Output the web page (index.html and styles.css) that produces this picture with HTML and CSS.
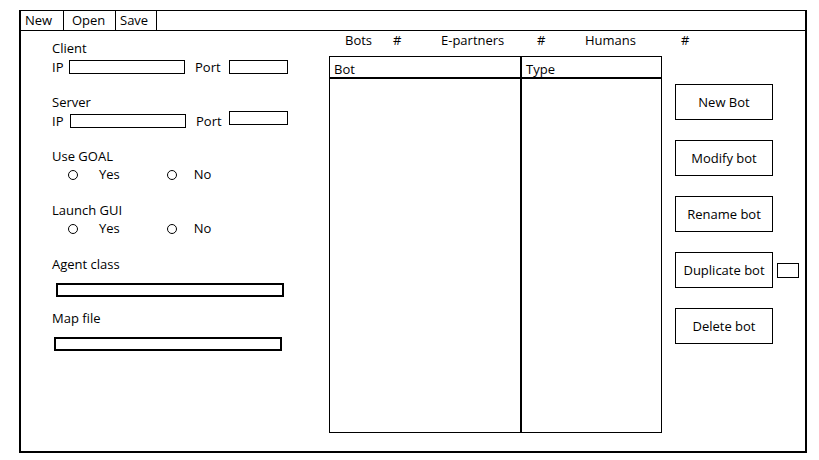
FILE: index.html
```html
<!DOCTYPE html>
<html>
<head>
<meta charset="utf-8">
<link rel="stylesheet" href="styles.css">
</head>
<body>
<div class="frame">
  <div class="menubar">
    <div class="menu-item m-new">New</div>
    <div class="menu-item m-open">Open</div>
    <div class="menu-item m-save">Save</div>
  </div>
  <div class="content">
    <div class="left">
      <div class="group">
        <div class="label">Client</div>
        <div class="row">
          <span class="ip-label">IP</span>
          <span class="field ip-field"></span>
          <span class="port-label">Port</span>
          <span class="field port-field"></span>
        </div>
      </div>
      <div class="group">
        <div class="label">Server</div>
        <div class="row row-server">
          <span class="ip-label ip-label-s">IP</span>
          <span class="field ip-field"></span>
          <span class="port-label port-label-s">Port</span>
          <span class="field port-field raised"></span>
        </div>
      </div>
      <div class="group">
        <div class="label">Use GOAL</div>
        <div class="row radio-row">
          <span class="radio r1"></span><span class="opt-yes">Yes</span>
          <span class="radio r2"></span><span class="opt-no">No</span>
        </div>
      </div>
      <div class="group">
        <div class="label">Launch GUI</div>
        <div class="row radio-row">
          <span class="radio r1"></span><span class="opt-yes">Yes</span>
          <span class="radio r2"></span><span class="opt-no">No</span>
        </div>
      </div>
      <div class="group">
        <div class="label">Agent class</div>
        <div class="wide-field agent-field"></div>
      </div>
      <div class="group">
        <div class="label">Map file</div>
        <div class="wide-field map-field"></div>
      </div>
    </div>
    <div class="center">
      <div class="counts">
        <span>Bots</span><span>#</span><span>E-partners</span><span>#</span><span>Humans</span><span>#</span>
      </div>
      <div class="bot-table">
        <div class="th th-bot">Bot</div>
        <div class="th th-type">Type</div>
        <div class="td td-bot"></div>
        <div class="td td-type"></div>
      </div>
    </div>
    <div class="right">
      <div class="btn">New Bot</div>
      <div class="btn">Modify bot</div>
      <div class="btn">Rename bot</div>
      <div class="btn-row">
        <div class="btn">Duplicate bot</div>
        <span class="small-box"></span>
      </div>
      <div class="btn">Delete bot</div>
    </div>
  </div>
</div>
</body>
</html>
```

FILE: styles.css
```css
* { box-sizing: border-box; }

body {
  margin: 0;
  background: #fff;
  font-family: "Open Sans", "Liberation Sans", sans-serif;
  font-size: 13px;
  color: #000;
}

.frame {
  margin: 10px 0 0 19px;
  width: 788px;
  height: 443px;
  border: 2px solid #000;
  border-top-width: 1px;
  display: flex;
  flex-direction: column;
}

.menubar {
  display: flex;
  height: 20px;
  border-bottom: 1px solid #000;
  line-height: 19px;
}

.menu-item {
  border-right: 1px solid #000;
  height: 19px;
}
.m-new { width: 43px; padding-left: 4px; }
.m-open { width: 52px; padding-left: 8px; }
.m-save { width: 41px; padding-left: 4px; }

.content {
  display: flex;
  flex: 1;
}

/* left form */
.left {
  width: 308px;
  padding: 9px 0 0 31px;
}

.group { height: 54px; }

.label { line-height: 16px; height: 16px; }

.row {
  display: flex;
  align-items: center;
  height: 16px;
  margin-top: 3px;
  line-height: 16px;
}

.ip-label { width: 17px; }
.ip-label-s { width: 18px; }
.port-label { width: 34px; margin-left: 10px; }
.port-label-s { width: 33px; margin-left: 10px; }

.field {
  display: block;
  height: 14px;
  border: 1px solid #000;
}
.ip-field { width: 116px; }
.port-field { width: 59px; }
.raised { margin-bottom: 6px; }

.radio-row { margin-top: 2px; }
.radio {
  display: block;
  width: 10px;
  height: 10px;
  border: 1px solid #000;
  border-radius: 50%;
  margin-top: 1px;
}
.r1 { margin-left: 16px; }
.opt-yes { margin-left: 21px; }
.r2 { margin-left: 47px; }
.opt-no { margin-left: 17px; }

.wide-field {
  width: 228px;
  height: 14px;
  border: 2px solid #000;
  margin-top: 11px;
}
.agent-field { margin-left: 4px; }
.map-field { margin-left: 2px; }

/* center */
.center {
  width: 333px;
  padding-top: 1px;
}

.counts {
  display: grid;
  grid-template-columns: 48px 48px 96px 48px 96px 48px;
  margin-left: 16px;
  line-height: 16px;
  height: 16px;
  white-space: nowrap;
}

.bot-table {
  margin-top: 8px;
  height: 377px;
  border: 1.5px solid #000;
  display: grid;
  grid-template-columns: 192px 1fr;
  grid-template-rows: 22px 1fr;
}

.th {
  border-bottom: 2px solid #000;
  padding: 4px 0 0 4px;
  line-height: 16px;
}
.th-bot, .td-bot { border-right: 2px solid #000; }

/* right */
.right {
  margin-left: 13px;
  padding-top: 53px;
  display: flex;
  flex-direction: column;
  gap: 20px;
}

.btn {
  width: 98px;
  height: 36px;
  border: 1.5px solid #000;
  display: flex;
  align-items: center;
  justify-content: center;
}

.btn-row {
  display: flex;
  align-items: center;
}

.small-box {
  display: block;
  width: 22px;
  height: 15px;
  margin-left: 4px;
  border: 1px solid #000;
}
```
